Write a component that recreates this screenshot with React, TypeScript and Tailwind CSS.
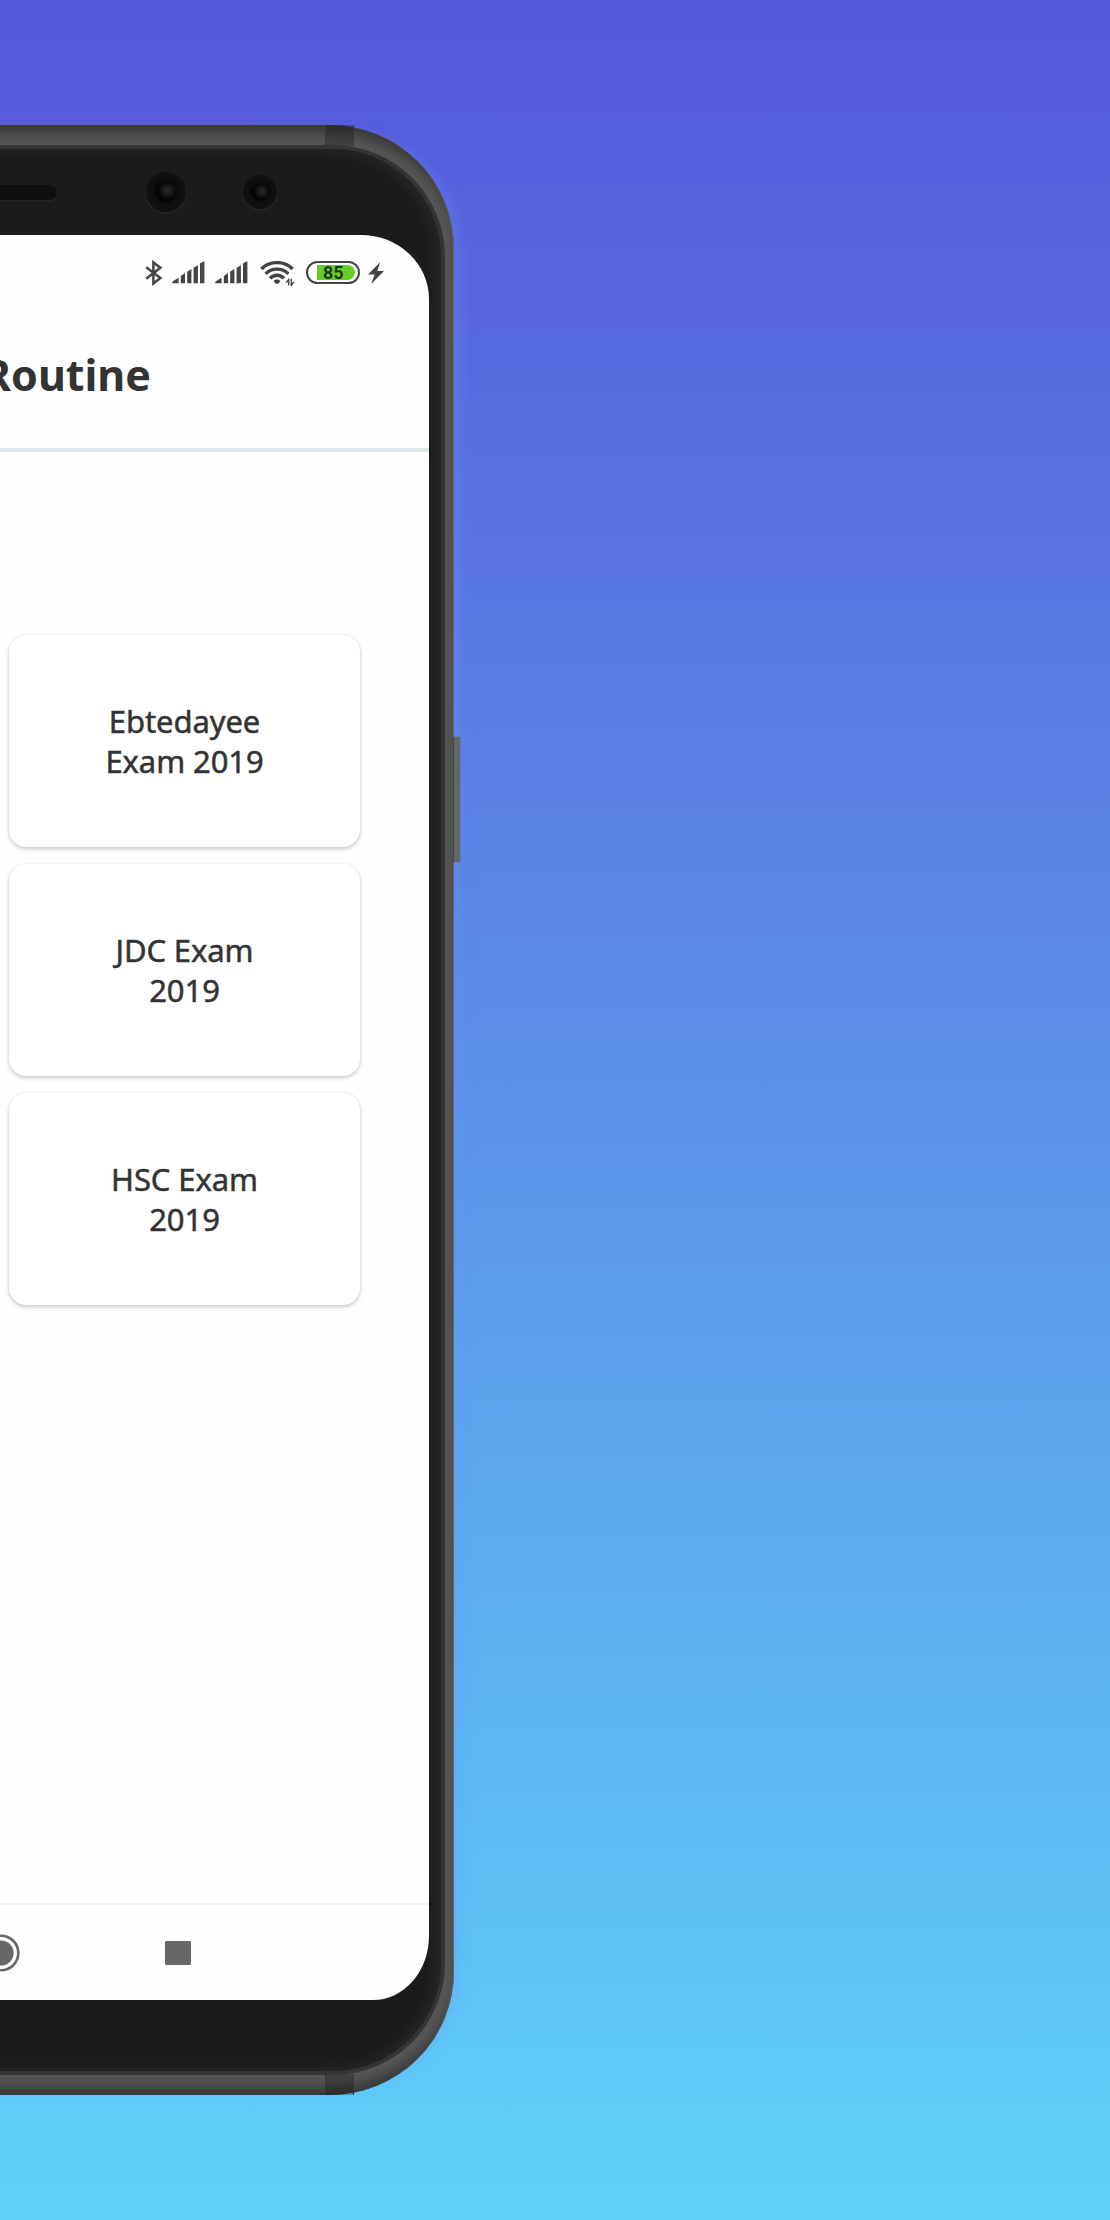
const exams = [
  ["Ebtedayee", "Exam 2019"],
  ["JDC Exam", "2019"],
  ["HSC Exam", "2019"],
];

function Bluetooth() {
  return (
    <svg width="18" height="26" viewBox="0 0 18 26">
      <path d="M1.2 7.2 L15.4 18 L8.4 23.4 V2.4 L15.4 7.8 L1.2 18.8" fill="none" stroke="#444" strokeWidth="2.5" />
    </svg>
  );
}

function Signal() {
  return (
    <svg width="33" height="23" viewBox="0 0 33 23" fill="#444">
      <path d="M0 22.3 Q0 20.4 2 19.5 L6.6 16.8 V22.3 Z M8.8 15 L13 12 V22.3 H8.8 Z M15.2 10.8 L19.4 8 V22.3 H15.2 Z M21.6 6.8 L25.9 4.2 V22.3 H21.6 Z M28 2.8 Q28 1.8 32.4 0.3 V22.3 H28 Z" />
    </svg>
  );
}

function Wifi() {
  return (
    <svg width="36" height="26" viewBox="0 0 36 26" fill="none" stroke="#444" strokeWidth="3.4">
      <path d="M1.4 8 C9.5 -.5 24.5 -.5 32.6 8" />
      <path d="M5.7 12.8 C11.5 6.6 22.5 6.6 28.3 12.8" />
      <path d="M10 17.3 C13.8 13.2 20.2 13.2 24 17.3" />
      <path d="M13.4 20 Q17 17.2 20.6 20 L18 22.7 Q17 23.4 16 22.7 Z" fill="#444" stroke="none" />
      <path d="M28.7 24.2 V17.5 M31.3 17.8 V25 M28.7 18.4 L26.2 21.6 M31.3 24.2 L33.8 21" strokeWidth="1.4" />
    </svg>
  );
}

function Bolt() {
  return (
    <svg width="17" height="22" viewBox="0 0 17 22" fill="#444">
      <path d="M12.3 0 L0 12.4 H6.6 L3.2 22 L16 9 H9.2 Z" />
    </svg>
  );
}

function StatusBar() {
  return (
    <div className="flex h-[75px] items-start pl-[209px] pt-[25px]">
      <Bluetooth />
      <div className="ml-[9px] mt-px"><Signal /></div>
      <div className="ml-[10px] mt-px"><Signal /></div>
      <div className="ml-[12px] mt-px"><Wifi /></div>
      <div className="ml-[10px] mt-px h-[23px] w-[54px] rounded-full border-2 border-[#444] px-[9px] py-[2px]">
        <div className="flex h-[15px] w-[38px] items-center rounded-r-full bg-[#66cc2b] pl-[6px] font-[Roboto,sans-serif] text-[18px] font-semibold leading-none text-[#223310]">85</div>
      </div>
      <div className="ml-[8px] mt-[2px]"><Bolt /></div>
    </div>
  );
}

function Camera({ big }: { big?: boolean }) {
  return (
    <div className={(big ? "size-[40px]" : "size-[34px]") + " flex items-center justify-center rounded-full bg-[#101010] shadow-[0_1px_1px_1px_#242424]"}>
      <div className={(big ? "size-[20px]" : "size-[17px]") + " rounded-full bg-[radial-gradient(circle_at_58%_42%,#292929_0%,#171717_32%,#020202_62%)] shadow-[0_-1px_4px_1px_#060606]"} />
    </div>
  );
}

function Bezel() {
  return (
    <div className="flex h-[89px] items-start pt-[26px]">
      <div className="mt-[13px] h-[15px] w-[121px] rounded-r-full bg-[#0f0f0f] shadow-[0_1px_1px_1px_#242424]" />
      <div className="ml-[89px]"><Camera big /></div>
      <div className="ml-[57px] mt-[3px]"><Camera /></div>
    </div>
  );
}

export default function App() {
  return (
    <div className="flex h-[2220px] w-[1110px] items-start overflow-hidden bg-[linear-gradient(180deg,#5657da_0%,#5a8ae7_43%,#5ca1ec_61%,#5fd2fb_100%)] pt-[125px] font-['Noto_Sans',sans-serif]">
      <div className="relative -ml-16 h-[1970px] w-[518px] shrink-0 rounded-r-[124px] bg-[#565656] pr-[9px] pt-[20px] shadow-[inset_0_14px_12px_-6px_#383838,inset_0_-14px_12px_-6px_#383838,inset_-1px_0_1px_#777,16px_0_14px_-10px_rgba(110,150,255,0.3)]">
        <div className="absolute left-[389px] top-0 h-[21px] w-[29px] border-x border-[#3a3a3a] bg-black/25" />
        <div className="absolute bottom-0 left-[389px] h-[21px] w-[29px] border-x border-[#3a3a3a] bg-black/25" />
        <div className="absolute left-[517px] top-[612px] h-[125px] w-[7px] border-l border-[#444] bg-[#666] shadow-[0_0_1px_#555]" />
        <div className="relative h-[1930px] rounded-r-[112px] border-4 border-l-0 border-[#343434] bg-[#1b1b1b] shadow-[inset_-3px_0_14px_2px_#292929]">
          <div className="-mt-[3px]">
            <Bezel />
          </div>
          <main className="mr-[12px] flex h-[1765px] flex-col overflow-hidden rounded-br-[56px_64px] rounded-tr-[68px_64px] bg-[#fefefe]">
            <StatusBar />
            <header className="flex h-[142px] items-start justify-end border-b-4 border-[#dfe6e9] pr-[278px] pt-[35px]">
              <h1 className="whitespace-nowrap text-[43px] font-bold leading-[60px] text-[#333]">Routine</h1>
            </header>
            <section className="flex flex-col gap-[17px] pl-[73px] pt-[183px]">
              {exams.map(([a, b]) => (
                <button key={a} className="flex h-[212px] w-[351px] flex-col items-center justify-center rounded-[17px] bg-white text-[31px] font-normal leading-[40px] tracking-[-0.1px] text-[#333] shadow-[0_2px_4px_rgba(0,0,0,0.2),0_0_2px_rgba(0,0,0,0.1)] [-webkit-text-stroke:0.5px_#333]">
                  <span>{a}</span>
                  <span>{b}</span>
                </button>
              ))}
            </section>
            <nav className="mt-auto flex h-[97px] items-center border-t-2 border-[#f3f3f3]">
              <svg width="38" height="38" viewBox="0 0 38 38" className="ml-[46px]">
                <circle cx="19" cy="19" r="17.3" fill="none" stroke="#676767" strokeWidth="2.6" />
                <circle cx="19" cy="19" r="12.6" fill="#676767" />
              </svg>
              <div className="ml-[145px] h-[24px] w-[26px] rounded-[1px] bg-[#676767]" />
            </nav>
          </main>
        </div>
      </div>
    </div>
  );
}
